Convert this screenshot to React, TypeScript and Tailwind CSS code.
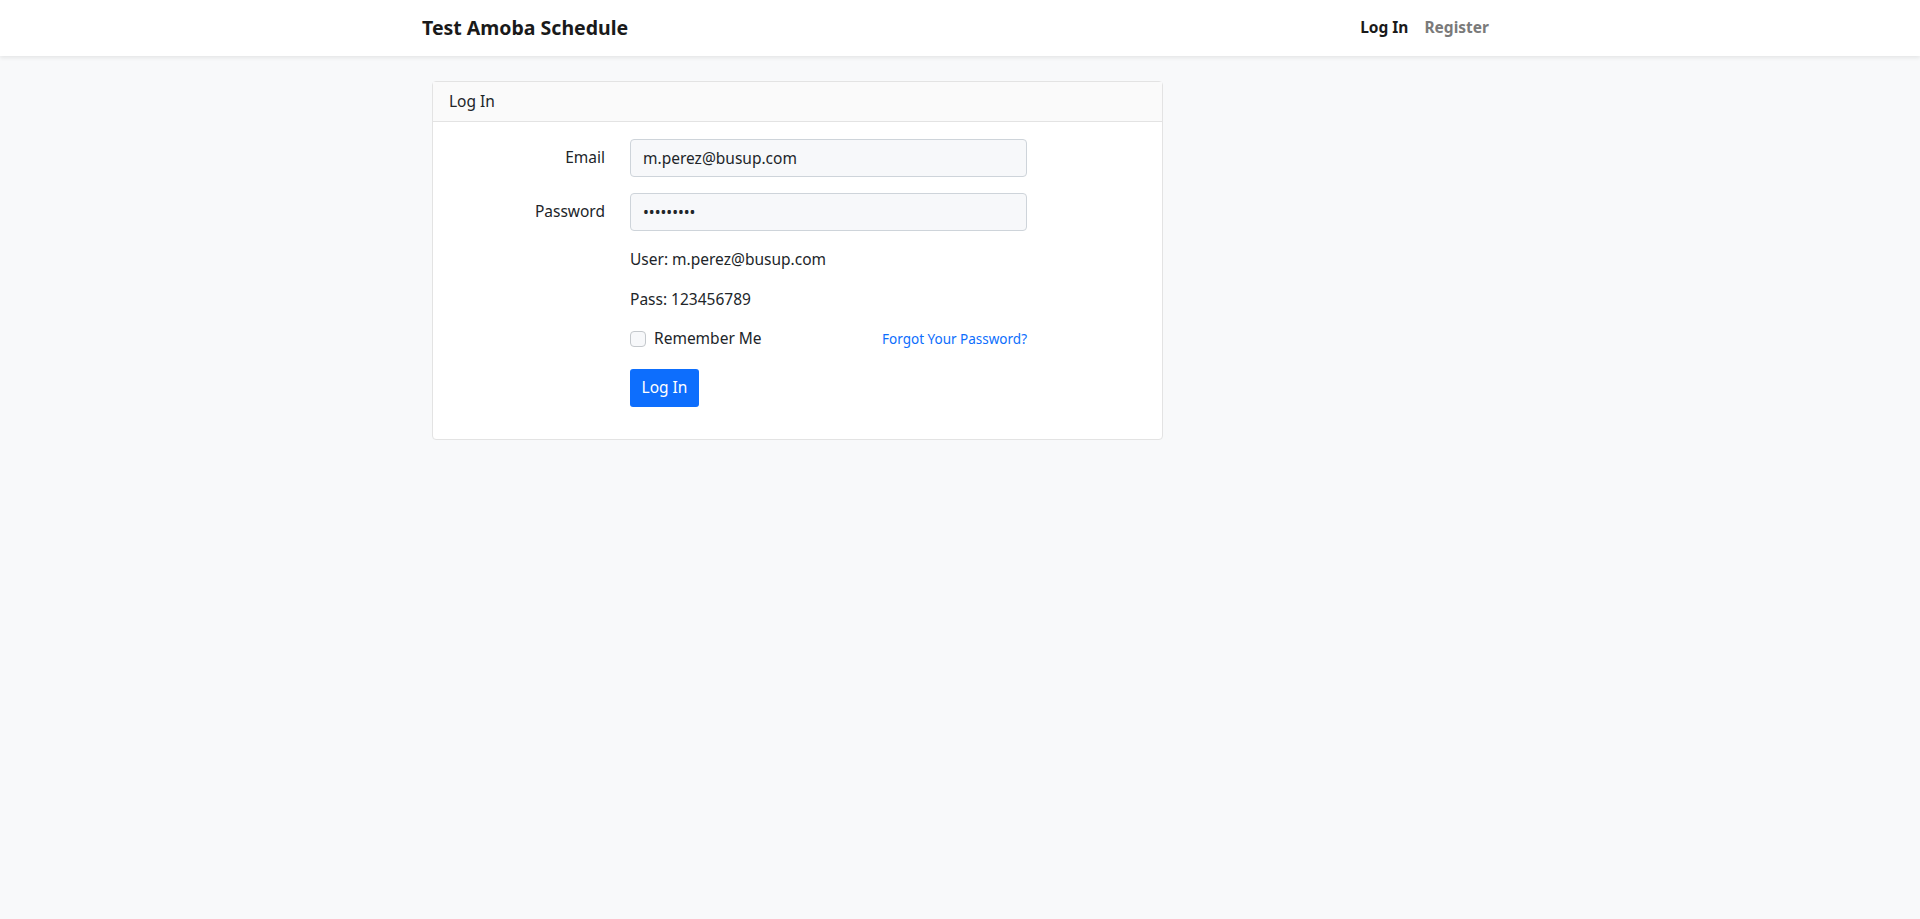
import React from "react"

const font = { fontFamily: '"Noto Sans", "Open Sans", sans-serif' }

const App = () => {
  return (
    <div className="min-h-[919px] bg-[#f8f9fa] text-[#212529]" style={font}>
      {/* Navbar */}
      <nav className="h-[56px] bg-white shadow-[0_2px_4px_rgba(0,0,0,0.08)] flex items-center">
        <div className="ml-[422px] w-[1067px] flex items-center justify-between">
          <span className="text-[19.5px] font-bold text-[#1a1a1a]">Test Amoba Schedule</span>
          <div className="flex items-center gap-[16px] text-[15.5px] font-bold">
            <a className="text-[#1a1a1a]">Log In</a>
            <a className="text-[#7a7a7a]">Register</a>
          </div>
        </div>
      </nav>

      {/* Card */}
      <div className="ml-[432px] mt-[25px] w-[731px] bg-white border border-[#e3e3e3] rounded-[4px] text-[15.5px]">
        <div className="h-[40px] bg-[#fafafa] border-b border-[#e3e3e3] flex items-center px-[16px]">
          Log In
        </div>
        <div className="pt-[17px] pb-[32px]">
          <div className="flex items-center mb-[16px]">
            <label className="w-[172px] text-right">Email</label>
            <input
              className="ml-[25px] w-[397px] h-[38px] px-[12px] bg-[#f7f8fa] border border-[#ced4da] rounded-[4px] text-[15.5px] text-[#212529] outline-none"
              defaultValue="m.perez@busup.com"
            />
          </div>
          <div className="flex items-center mb-[16px]">
            <label className="w-[172px] text-right">Password</label>
            <input
              type="password"
              className="ml-[25px] w-[397px] h-[38px] px-[12px] bg-[#f7f8fa] border border-[#ced4da] rounded-[4px] text-[15.5px] text-[#212529] outline-none"
              defaultValue="123456789"
            />
          </div>
          <div className="ml-[197px] w-[397px]">
            <p className="leading-[24px] mb-[16px]">User: m.perez@busup.com</p>
            <p className="leading-[24px] mb-[16px]">Pass: 123456789</p>
            <div className="flex items-center justify-between h-[24px] mb-[18px]">
              <label className="flex items-center gap-[8px]">
                <span className="w-[16px] h-[16px] rounded-[4px] border border-[#c4c8cc] bg-[#f7f8fa]" />
                Remember Me
              </label>
              <a className="text-[13.5px] text-[#0d6efd]">Forgot Your Password?</a>
            </div>
            <button className="h-[38px] w-[69px] bg-[#0d6efd] text-white rounded-[3px]">
              Log In
            </button>
          </div>
        </div>
      </div>
    </div>
  )
}

export default App
